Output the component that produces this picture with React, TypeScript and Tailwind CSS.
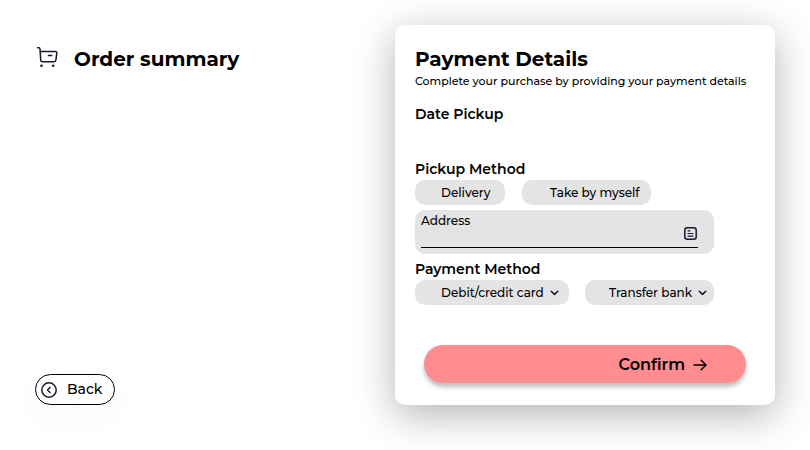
import type { ReactNode } from "react";

const ink = "#1a1530";

function CartIcon() {
  return (
    <svg className="h-[22px] w-[22px] shrink-0" viewBox="0 1 22 22" fill="none" stroke={ink} strokeWidth="1.5" strokeLinecap="round" strokeLinejoin="round" aria-hidden="true">
      <path d="M1.500 1.800h1.300c.7 0 1.200.5 1.200 1.200l.7 10.800c.1 1.200.8 1.900 2 1.900h11.300c1.100 0 1.800-.6 1.900-1.700l.9-6.700c.1-1.100-.5-1.800-1.600-1.800H4.300" />
      <path d="M12.500 9.500h3.200" />
      <circle cx="5.500" cy="19.800" r="1.300" fill={ink} stroke="none" />
      <circle cx="17.200" cy="19.800" r="1.300" fill={ink} stroke="none" />
    </svg>
  );
}

function BackIcon() {
  return (
    <svg className="h-4 w-4 shrink-0" viewBox="0 0 16 16" fill="none" stroke={ink} strokeWidth="1.500" strokeLinecap="round" strokeLinejoin="round" aria-hidden="true">
      <circle cx="8" cy="8" r="7.200" />
      <path d="M9 5.500 6.500 8 9 10.500" />
    </svg>
  );
}

function NoteIcon() {
  return (
    <svg className="h-[13px] w-[13px] shrink-0" viewBox="0 0 13 13" fill="none" stroke={ink} strokeWidth="1.500" strokeLinecap="round" strokeLinejoin="round" aria-hidden="true">
      <rect x="0.800" y="0.800" width="11.400" height="11.400" rx="2.500" />
      <path strokeWidth="1.200" d="M4 3.900h1.800M4 6.500h5M4 9.100h5" />
    </svg>
  );
}

function ArrowIcon() {
  return (
    <svg className="h-3.5 w-3.5 shrink-0" viewBox="0 0 14 14" fill="none" stroke="#000" strokeWidth="1.500" strokeLinecap="round" strokeLinejoin="round" aria-hidden="true">
      <path d="M1 7h12M8.200 2.200 13 7l-4.800 4.800" />
    </svg>
  );
}

function SectionTitle({ children }: { children: ReactNode }) {
  return <h3 className="text-[14px] leading-[22px] font-semibold">{children}</h3>;
}

function MethodButton({ label, className }: { label: string; className: string }) {
  return (
    <button type="button" className={`h-[25px] rounded-[10px] bg-[#e4e4e4] text-left text-[12px] leading-[25px] font-medium ${className}`}>
      {label}
    </button>
  );
}

function MethodSelect({ label, className, chevron }: { label: string; className: string; chevron: string }) {
  return (
    <div className="relative">
      <select aria-label={label} className={`block h-[25px] appearance-none rounded-[10px] bg-[#e4e4e4] text-[12px] leading-[25px] font-medium ${className}`}>
        <option>{label}</option>
      </select>
      <svg className={`pointer-events-none absolute top-2 h-[9px] w-[9px] ${chevron}`} viewBox="0 0 9 9" fill="none" stroke={ink} strokeWidth="1.500" strokeLinecap="round" strokeLinejoin="round" aria-hidden="true">
        <path d="M1.200 3.200 4.500 6.400 7.800 3.200" />
      </svg>
    </div>
  );
}

export default function App() {
  return (
    <div className="min-h-screen bg-white font-['Montserrat','Inter',sans-serif] text-black">
      <main className="flex justify-between px-[35px] py-[25px]">
        <section className="flex flex-col items-start justify-between">
          <div className="flex items-start gap-4 pt-5 pl-px">
            <div className="pt-0.5">
              <CartIcon />
            </div>
            <h1 className="text-[20px] leading-7 font-bold">Order summary</h1>
          </div>
          <button type="button" className="flex h-[31px] w-20 items-center gap-2.5 rounded-full border border-black bg-white pl-[5px] text-[14px] font-medium shadow-[0_10px_40px_rgba(0,0,0,0.03)]">
            <BackIcon />
            Back
          </button>
        </section>

        <section className="w-[380px] rounded-[10px] bg-white px-5 pt-5 pb-[22px] shadow-[0_10px_40px_rgba(0,0,0,0.3)]">
          <h2 className="text-[20px] leading-7 font-bold">Payment Details</h2>
          <p className="text-[11px] leading-4 font-medium">Complete your purchase by providing your payment details</p>

          <div className="mt-3.5 h-[55px]">
            <SectionTitle>Date Pickup</SectionTitle>
          </div>

          <SectionTitle>Pickup Method</SectionTitle>
          <div className="flex gap-[17px]">
            <MethodButton label="Delivery" className="w-[90px] pl-[26px]" />
            <MethodButton label="Take by myself" className="w-[129px] pl-7" />
          </div>

          <div className="mt-[5px] h-11 w-[299px] rounded-[10px] bg-[#e4e4e4] pt-[3px] pr-4 pl-[6px]">
            <label htmlFor="address" className="block h-[11px] text-[12px] leading-4 font-medium">Address</label>
            <div className="flex h-6 items-start border-b border-black pt-[3px] pr-px">
              <input id="address" type="text" className="h-5 min-w-0 flex-1 bg-transparent text-[12px] outline-none" />
              <NoteIcon />
            </div>
          </div>

          <div className="mt-1">
            <SectionTitle>Payment Method</SectionTitle>
          </div>
          <div className="flex gap-4">
            <MethodSelect label="Debit/credit card" className="w-[154px] pl-[26px]" chevron="right-[10px]" />
            <MethodSelect label="Transfer bank" className="w-[129px] pl-6" chevron="right-[7px]" />
          </div>

          <div className="mt-10 px-[9px]">
            <button type="button" className="flex h-[38px] w-full items-center justify-end gap-2 rounded-full bg-[#ff8c8f] pt-px pr-[39px] text-[16px] font-semibold shadow-[0_4px_4px_rgba(0,0,0,0.25)]">
              Confirm
              <ArrowIcon />
            </button>
          </div>
        </section>
      </main>
    </div>
  );
}
